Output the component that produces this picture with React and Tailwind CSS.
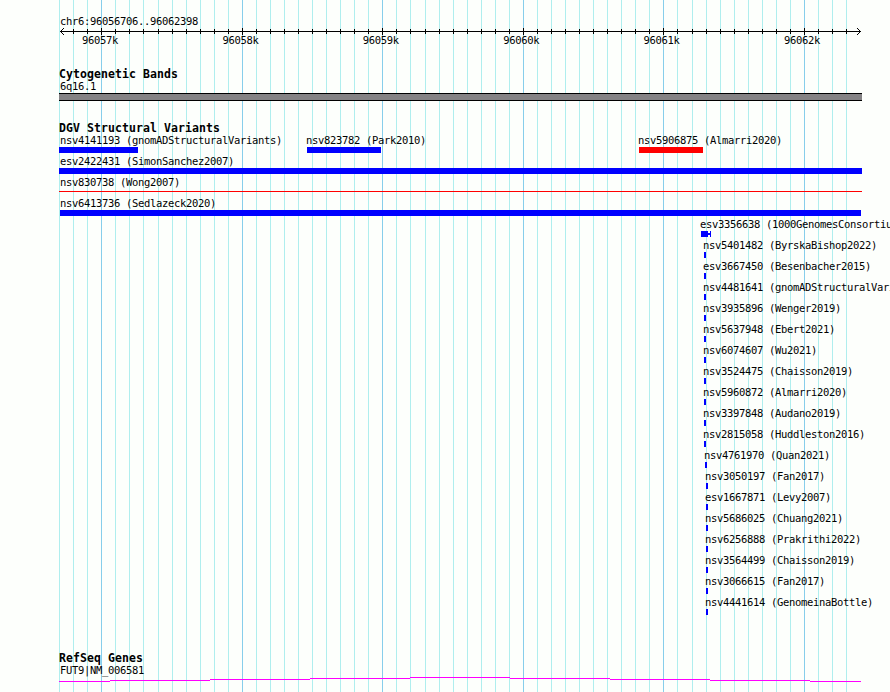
import React from "react";
import { clsx } from "clsx";

const LEFT = 59;

// every 14.07px is 100bp, so the pitch slips by a pixel three times
const gridX = Array.from({ length: 57 }, (_, k) => ({
    x: LEFT + k * 14 + (k >= 7 ? 1 : 0) + (k >= 26 ? 1 : 0) + (k >= 45 ? 1 : 0),
    major: k % 10 === 3,
}));

const majorLabels = ["96057k", "96058k", "96059k", "96060k", "96061k", "96062k"];

const rows = [
    [
        { name: "nsv4141193 (gnomADStructuralVariants)", start: 59, end: 138, pad: 1 },
        { name: "nsv823782 (Park2010)", start: 307, end: 381 },
        { name: "nsv5906875 (Almarri2020)", start: 639, end: 703, loss: true },
    ],
    [{ name: "esv2422431 (SimonSanchez2007)", start: 59, end: 862, pad: 1 }],
    [{ name: "nsv830738 (Wong2007)", start: 59, end: 862, pad: 1, thin: true }],
    [{ name: "nsv6413736 (Sedlazeck2020)", start: 60, end: 861, flush: true }],
    [{ name: "esv3356638 (1000GenomesConsortium)", start: 701, end: 711, split: true }],
    [{ name: "nsv5401482 (ByrskaBishop2022)", start: 704, end: 706 }],
    [{ name: "esv3667450 (Besenbacher2015)", start: 704, end: 706 }],
    [{ name: "nsv4481641 (gnomADStructuralVariants)", start: 704, end: 706 }],
    [{ name: "nsv3935896 (Wenger2019)", start: 704, end: 706 }],
    [{ name: "nsv5637948 (Ebert2021)", start: 704, end: 706 }],
    [{ name: "nsv6074607 (Wu2021)", start: 704, end: 706 }],
    [{ name: "nsv3524475 (Chaisson2019)", start: 704, end: 706 }],
    [{ name: "nsv5960872 (Almarri2020)", start: 704, end: 706 }],
    [{ name: "nsv3397848 (Audano2019)", start: 704, end: 706 }],
    [{ name: "nsv2815058 (Huddleston2016)", start: 704, end: 706 }],
    [{ name: "nsv4761970 (Quan2021)", start: 705, end: 707 }],
    [{ name: "nsv3050197 (Fan2017)", start: 706, end: 708 }],
    [{ name: "esv1667871 (Levy2007)", start: 706, end: 708 }],
    [{ name: "nsv5686025 (Chuang2021)", start: 706, end: 708 }],
    [{ name: "nsv6256888 (Prakrithi2022)", start: 706, end: 708 }],
    [{ name: "nsv3564499 (Chaisson2019)", start: 706, end: 708 }],
    [{ name: "nsv3066615 (Fan2017)", start: 706, end: 708 }],
    [{ name: "nsv4441614 (GenomeinaBottle)", start: 706, end: 708 }],
];

function GridLines() {
    return (
        <svg className="absolute inset-0" width="890" height="692" shapeRendering="crispEdges">
            {gridX.map(({ x, major }) => (
                <rect key={x} x={x} y="0" width="1" height="692" fill={major ? "#87ceeb" : "#afeeee"} />
            ))}
        </svg>
    );
}

function Axis() {
    return (
        <svg className="block" width="890" height="9" shapeRendering="crispEdges">
            <rect x="60" y="4" width="801" height="1" />
            {gridX.slice(1).map(({ x, major }) => (
                <rect key={x} x={x} y={major ? 1 : 2} width="1" height={major ? 7 : 5} />
            ))}
            {[1, 2, 3].map((i) => (
                <g key={i}>
                    <rect x={60 + i} y={4 - i} width="1" height="1" />
                    <rect x={60 + i} y={4 + i} width="1" height="1" />
                    <rect x={860 - i} y={4 - i} width="1" height="1" />
                    <rect x={860 - i} y={4 + i} width="1" height="1" />
                </g>
            ))}
        </svg>
    );
}

function TrackTitle({ children }) {
    return (
        <h2 className="h-3 pl-[59px] font-bold text-[11.5px] leading-3 tracking-[0.077px]">{children}</h2>
    );
}

function Glyph({ feature }) {
    if (feature.thin) {
        return <div className="mt-[2px] h-px bg-[#ff0000]" />;
    }
    if (feature.split) {
        return (
            <div className="flex h-1.5 items-center">
                <div className="h-1.5 w-[7px] bg-[#0000ff]" />
                <div className="h-0.5 w-0.5 bg-[#0000ff]" />
                <div className="h-1.5 w-px bg-[#0000ff]" />
            </div>
        );
    }
    return <div className={clsx("h-1.5", feature.loss ? "bg-[#ff0000]" : "bg-[#0000ff]")} />;
}

function VariantRow({ features }) {
    return (
        <div className="flex h-[21px]">
            {features.map((f, i) => (
                <div
                    key={f.name}
                    className="shrink-0"
                    style={{ marginLeft: f.start - (i ? features[i - 1].end : 0), width: f.end - f.start }}
                >
                    <div className={clsx("h-3 whitespace-nowrap", f.pad ? "pl-px" : !f.flush && "-ml-px")}>
                        {f.name}
                    </div>
                    <Glyph feature={f} />
                </div>
            ))}
        </div>
    );
}

function GeneLine() {
    const steps = [
        [59, 110, 4], [110, 210, 3], [210, 310, 2], [310, 410, 1], [410, 510, 0],
        [510, 610, 1], [610, 710, 2], [710, 810, 3], [810, 861, 4],
    ];
    return (
        <svg className="block" width="890" height="5" shapeRendering="crispEdges">
            {steps.map(([a, b, y]) => (
                <rect key={a} x={a} y={y} width={b - a} height="1" fill="#ff00ff" />
            ))}
        </svg>
    );
}

export default function App() {
    return (
        <div className="relative h-[692px] w-[890px] overflow-hidden bg-[#fdfffc] font-['DejaVu_Sans_Mono',monospace] text-[10.5px] leading-[10px] tracking-[-0.321px] text-black">
            <GridLines />
            <main className="relative flex flex-col">
                {/* Scale */}
                <section className="pt-[15px]">
                    <div className="h-3 pl-[60px] leading-3">chr6:96056706..96062398</div>
                    <Axis />
                    <div className="-mt-px flex h-3 gap-[104.4px] pl-[82px]">
                        {majorLabels.map((label) => (
                            <span key={label} className="w-9 shrink-0">{label}</span>
                        ))}
                    </div>
                </section>

                {/* Cytoband */}
                <section className="pt-[21px]">
                    <TrackTitle>Cytogenetic Bands</TrackTitle>
                    <div className="mt-px h-3 pl-[60px]">6q16.1</div>
                    <div className="ml-[59px] h-2 w-[803px] border-y border-black bg-[#848284]" />
                </section>

                {/* Structural variants */}
                <section className="pt-[21px]">
                    <TrackTitle>DGV Structural Variants</TrackTitle>
                    <div className="mt-px">
                        {rows.map((features) => (
                            <VariantRow key={features[0].name} features={features} />
                        ))}
                    </div>
                </section>

                {/* Genes */}
                <section className="pt-[34px]">
                    <TrackTitle>RefSeq Genes</TrackTitle>
                    <div className="mt-px h-3 pl-[60px]">FUT9|NM_006581</div>
                    <GeneLine />
                </section>
            </main>
        </div>
    );
}
